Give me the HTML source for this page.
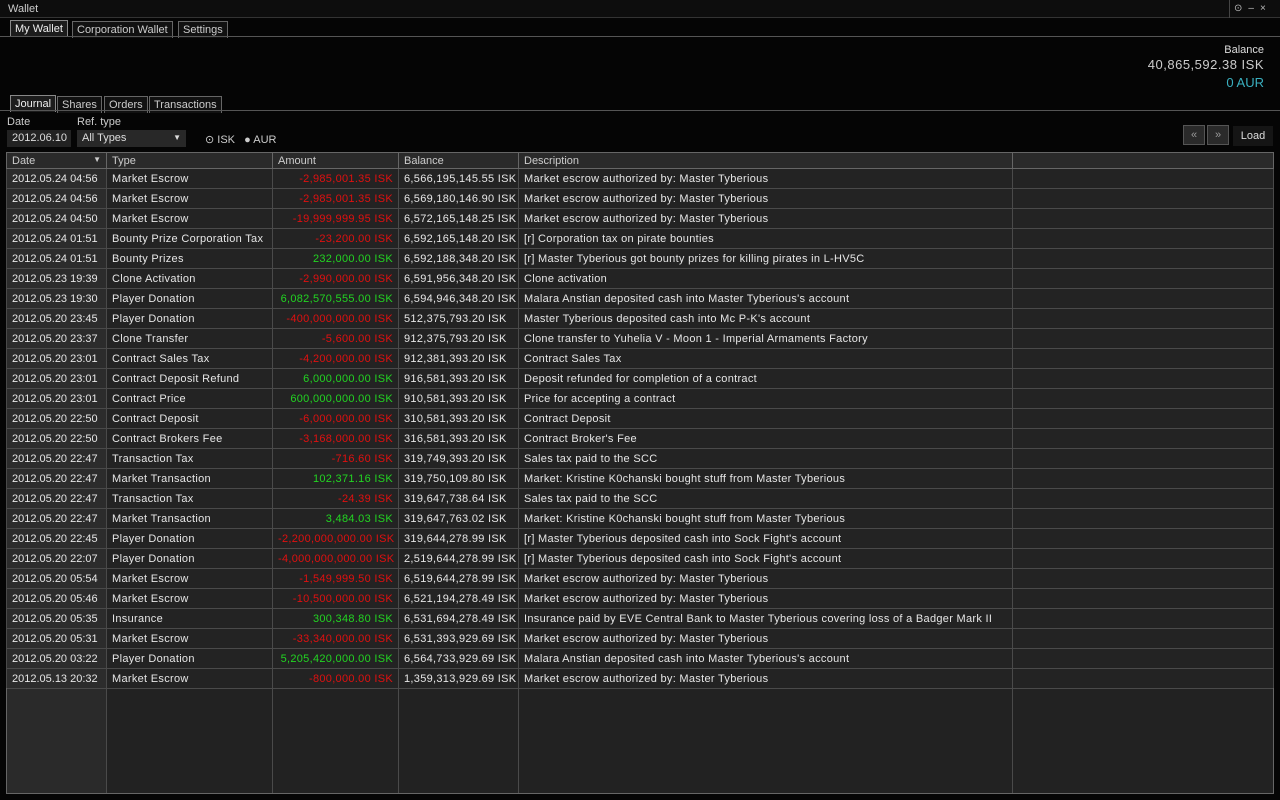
<!DOCTYPE html>
<html><head><meta charset="utf-8"><style>
*{margin:0;padding:0;box-sizing:border-box}
body{width:1280px;height:800px;background:#050505;font-family:"Liberation Sans",sans-serif;font-size:11px;color:#ddd;position:relative;overflow:hidden}
.abs{position:absolute}
.title{left:0;top:0;width:1280px;height:18px;background:#0d0d0d;border-bottom:1px solid #333}
.tab{position:absolute;height:17px;border:1px solid #666;border-bottom:none;color:#ccc;padding:2px 4px;font-size:11px;background:#111}
.tab.on{background:#1c1c1c;color:#eee;border-color:#888}
.hl{position:absolute;height:1px;background:#555}
table{position:absolute;left:6px;top:152px;width:1268px;border-collapse:collapse;table-layout:fixed}
td,th{height:20px;border:1px solid #4a4a4a;padding:0 5px;white-space:nowrap;overflow:hidden;font-weight:normal;text-align:left;color:#e6e6e6;letter-spacing:0.3px}
td:first-child{letter-spacing:0}
th{height:16px;background:#2a2a2a;color:#ccc;border-color:#666;letter-spacing:0}
td:first-child{background:#2c2c2c}
td{background:#232323}
.r{text-align:right}
.neg{color:#e01010}.pos{color:#22d422}
.fill{position:absolute;left:6px;top:688px;width:1268px;height:106px;border:1px solid #666;border-top:none}
</style></head><body>
<div class="abs title"><span style="position:absolute;left:8px;top:3px;color:#ccc">Wallet</span>
<span style="position:absolute;left:1229px;top:0;width:51px;height:18px;border-left:1px solid #444;color:#bbb;font-size:10px;padding:3px 0 0 4px;letter-spacing:6px">⊙–×</span></div>
<div class="tab on" style="left:10px;top:20px">My Wallet</div>
<div class="tab" style="left:72px;top:21px">Corporation Wallet</div>
<div class="tab" style="left:178px;top:21px">Settings</div>
<div class="hl" style="left:0;top:36px;width:1280px"></div>
<div class="abs" style="right:16px;top:44px;text-align:right;line-height:18px">
<div style="font-size:11px;color:#ddd;line-height:12px">Balance</div>
<div style="font-size:13px;color:#ccc;letter-spacing:0.5px">40,865,592.38 ISK</div>
<div style="font-size:13px;color:#3ab0c0">0 AUR</div></div>
<div class="tab on" style="left:10px;top:95px">Journal</div>
<div class="tab" style="left:57px;top:96px">Shares</div>
<div class="tab" style="left:104px;top:96px">Orders</div>
<div class="tab" style="left:149px;top:96px">Transactions</div>
<div class="hl" style="left:0;top:110px;width:1280px"></div>
<div class="abs" style="left:7px;top:116px;color:#ccc">Date</div>
<div class="abs" style="left:77px;top:116px;color:#ccc">Ref. type</div>
<div class="abs" style="left:7px;top:130px;width:64px;height:17px;background:#222;padding:2px 5px;color:#ddd">2012.06.10</div>
<div class="abs" style="left:77px;top:130px;width:109px;height:17px;background:#282828;padding:2px 5px;color:#ddd">All Types<span style="position:absolute;right:5px;top:3px;font-size:8px">▼</span></div>
<div class="abs" style="left:205px;top:133px;color:#ccc">⊙ ISK &nbsp; ● AUR</div>
<div class="abs" style="left:1183px;top:125px;width:22px;height:20px;background:#2a2a2a;border:1px solid #555;color:#999;text-align:center;padding-top:3px">«</div>
<div class="abs" style="left:1207px;top:125px;width:22px;height:20px;background:#2a2a2a;border:1px solid #555;color:#999;text-align:center;padding-top:3px">»</div>
<div class="abs" style="left:1233px;top:126px;width:40px;height:20px;background:#151515;color:#ddd;text-align:center;padding-top:4px">Load</div>
<table>
<colgroup><col style="width:100px"><col style="width:166px"><col style="width:126px"><col style="width:120px"><col style="width:494px"><col></colgroup>
<tr><th>Date<span style="float:right;font-size:8px">▼</span></th><th>Type</th><th>Amount</th><th>Balance</th><th>Description</th><th></th></tr>
<tr><td>2012.05.24 04:56</td><td>Market Escrow</td><td class="r neg">-2,985,001.35 ISK</td><td>6,566,195,145.55 ISK</td><td>Market escrow authorized by: Master Tyberious</td><td></td></tr>
<tr><td>2012.05.24 04:56</td><td>Market Escrow</td><td class="r neg">-2,985,001.35 ISK</td><td>6,569,180,146.90 ISK</td><td>Market escrow authorized by: Master Tyberious</td><td></td></tr>
<tr><td>2012.05.24 04:50</td><td>Market Escrow</td><td class="r neg">-19,999,999.95 ISK</td><td>6,572,165,148.25 ISK</td><td>Market escrow authorized by: Master Tyberious</td><td></td></tr>
<tr><td>2012.05.24 01:51</td><td>Bounty Prize Corporation Tax</td><td class="r neg">-23,200.00 ISK</td><td>6,592,165,148.20 ISK</td><td>[r] Corporation tax on pirate bounties</td><td></td></tr>
<tr><td>2012.05.24 01:51</td><td>Bounty Prizes</td><td class="r pos">232,000.00 ISK</td><td>6,592,188,348.20 ISK</td><td>[r] Master Tyberious got bounty prizes for killing pirates in L-HV5C</td><td></td></tr>
<tr><td>2012.05.23 19:39</td><td>Clone Activation</td><td class="r neg">-2,990,000.00 ISK</td><td>6,591,956,348.20 ISK</td><td>Clone activation</td><td></td></tr>
<tr><td>2012.05.23 19:30</td><td>Player Donation</td><td class="r pos">6,082,570,555.00 ISK</td><td>6,594,946,348.20 ISK</td><td>Malara Anstian deposited cash into Master Tyberious's account</td><td></td></tr>
<tr><td>2012.05.20 23:45</td><td>Player Donation</td><td class="r neg">-400,000,000.00 ISK</td><td>512,375,793.20 ISK</td><td>Master Tyberious deposited cash into Mc P-K's account</td><td></td></tr>
<tr><td>2012.05.20 23:37</td><td>Clone Transfer</td><td class="r neg">-5,600.00 ISK</td><td>912,375,793.20 ISK</td><td>Clone transfer to Yuhelia V - Moon 1 - Imperial Armaments Factory</td><td></td></tr>
<tr><td>2012.05.20 23:01</td><td>Contract Sales Tax</td><td class="r neg">-4,200,000.00 ISK</td><td>912,381,393.20 ISK</td><td>Contract Sales Tax</td><td></td></tr>
<tr><td>2012.05.20 23:01</td><td>Contract Deposit Refund</td><td class="r pos">6,000,000.00 ISK</td><td>916,581,393.20 ISK</td><td>Deposit refunded for completion of a contract</td><td></td></tr>
<tr><td>2012.05.20 23:01</td><td>Contract Price</td><td class="r pos">600,000,000.00 ISK</td><td>910,581,393.20 ISK</td><td>Price for accepting a contract</td><td></td></tr>
<tr><td>2012.05.20 22:50</td><td>Contract Deposit</td><td class="r neg">-6,000,000.00 ISK</td><td>310,581,393.20 ISK</td><td>Contract Deposit</td><td></td></tr>
<tr><td>2012.05.20 22:50</td><td>Contract Brokers Fee</td><td class="r neg">-3,168,000.00 ISK</td><td>316,581,393.20 ISK</td><td>Contract Broker's Fee</td><td></td></tr>
<tr><td>2012.05.20 22:47</td><td>Transaction Tax</td><td class="r neg">-716.60 ISK</td><td>319,749,393.20 ISK</td><td>Sales tax paid to the SCC</td><td></td></tr>
<tr><td>2012.05.20 22:47</td><td>Market Transaction</td><td class="r pos">102,371.16 ISK</td><td>319,750,109.80 ISK</td><td>Market: Kristine K0chanski bought stuff from Master Tyberious</td><td></td></tr>
<tr><td>2012.05.20 22:47</td><td>Transaction Tax</td><td class="r neg">-24.39 ISK</td><td>319,647,738.64 ISK</td><td>Sales tax paid to the SCC</td><td></td></tr>
<tr><td>2012.05.20 22:47</td><td>Market Transaction</td><td class="r pos">3,484.03 ISK</td><td>319,647,763.02 ISK</td><td>Market: Kristine K0chanski bought stuff from Master Tyberious</td><td></td></tr>
<tr><td>2012.05.20 22:45</td><td>Player Donation</td><td class="r neg">-2,200,000,000.00 ISK</td><td>319,644,278.99 ISK</td><td>[r] Master Tyberious deposited cash into Sock Fight's account</td><td></td></tr>
<tr><td>2012.05.20 22:07</td><td>Player Donation</td><td class="r neg">-4,000,000,000.00 ISK</td><td>2,519,644,278.99 ISK</td><td>[r] Master Tyberious deposited cash into Sock Fight's account</td><td></td></tr>
<tr><td>2012.05.20 05:54</td><td>Market Escrow</td><td class="r neg">-1,549,999.50 ISK</td><td>6,519,644,278.99 ISK</td><td>Market escrow authorized by: Master Tyberious</td><td></td></tr>
<tr><td>2012.05.20 05:46</td><td>Market Escrow</td><td class="r neg">-10,500,000.00 ISK</td><td>6,521,194,278.49 ISK</td><td>Market escrow authorized by: Master Tyberious</td><td></td></tr>
<tr><td>2012.05.20 05:35</td><td>Insurance</td><td class="r pos">300,348.80 ISK</td><td>6,531,694,278.49 ISK</td><td>Insurance paid by EVE Central Bank to Master Tyberious covering loss of a Badger Mark II</td><td></td></tr>
<tr><td>2012.05.20 05:31</td><td>Market Escrow</td><td class="r neg">-33,340,000.00 ISK</td><td>6,531,393,929.69 ISK</td><td>Market escrow authorized by: Master Tyberious</td><td></td></tr>
<tr><td>2012.05.20 03:22</td><td>Player Donation</td><td class="r pos">5,205,420,000.00 ISK</td><td>6,564,733,929.69 ISK</td><td>Malara Anstian deposited cash into Master Tyberious's account</td><td></td></tr>
<tr><td>2012.05.13 20:32</td><td>Market Escrow</td><td class="r neg">-800,000.00 ISK</td><td>1,359,313,929.69 ISK</td><td>Market escrow authorized by: Master Tyberious</td><td></td></tr>
</table>
<div class="fill">
<div class="abs" style="left:0;top:0;width:100px;height:105px;background:#2a2a2a;border-right:1px solid #4a4a4a"></div>
<div class="abs" style="left:100px;top:0;width:166px;height:105px;background:#222;border-right:1px solid #4a4a4a"></div>
<div class="abs" style="left:266px;top:0;width:126px;height:105px;background:#222;border-right:1px solid #4a4a4a"></div>
<div class="abs" style="left:392px;top:0;width:120px;height:105px;background:#222;border-right:1px solid #4a4a4a"></div>
<div class="abs" style="left:512px;top:0;width:494px;height:105px;background:#222;border-right:1px solid #4a4a4a"></div>
<div class="abs" style="left:1006px;top:0;width:260px;height:105px;background:#222"></div>
<div class="abs" style="left:0;top:0;width:1266px;height:1px;background:#4a4a4a"></div>
</div>
</body></html>
